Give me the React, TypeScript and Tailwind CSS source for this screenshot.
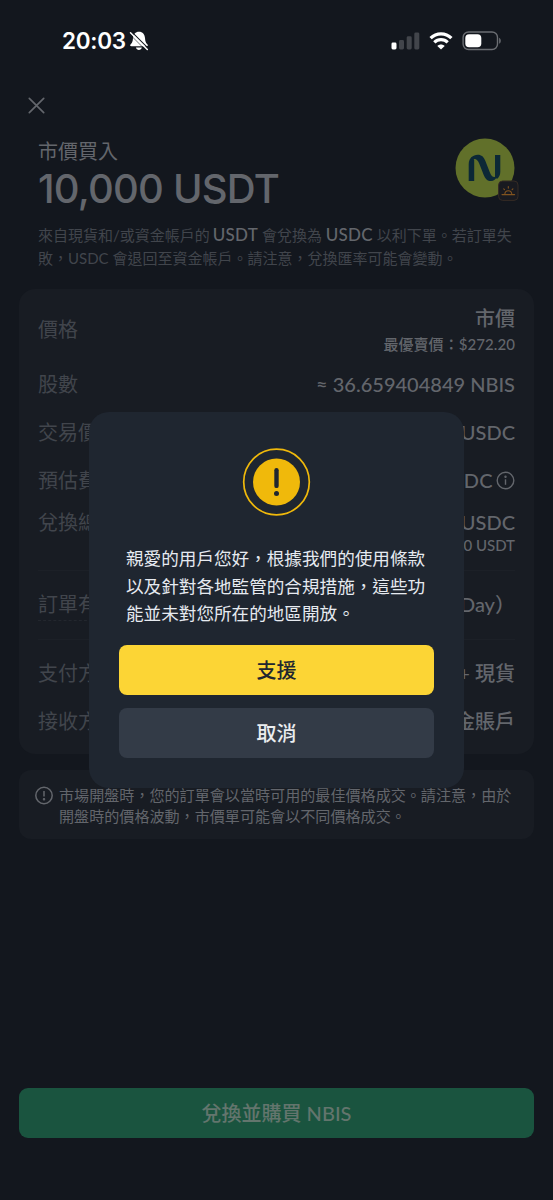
import type { ReactNode } from 'react';

function StatusBar() {
  return (
    <div className="flex h-[82px] shrink-0 items-center justify-between pl-[62px] pr-[51px]">
      <div className="flex items-center gap-[3px] text-white">
        <span className="font-['Inter',sans-serif] text-[22.5px] leading-[30px] font-semibold tracking-[-0.3px]">20:03</span>
        <svg width="20" height="20" viewBox="0 0 20 20" fill="none">
          <path d="M10 .8C6.300.8 4.300 3.400 4 7c-.3 4-1 4.800-2.300 6.200-1 1-.6 2 .8 2h15c1.400 0 1.800-1 .8-2-1.300-1.400-2-2.200-2.300-6.200-.3-3.600-2.300-6.200-6-6.200z" fill="currentColor" />
          <path d="M6.900 16.600h6c-.4 1.600-1.500 2.400-3 2.400s-2.600-.8-3-2.400z" fill="currentColor" />
          <path d="M2.700.800l16.800 16.800" stroke="#13171e" strokeWidth="1.200" />
          <path d="M1.500 1.700l16.800 16.800" stroke="currentColor" strokeWidth="1.500" strokeLinecap="round" />
          <path d="M.4 2.900l16.800 16.800" stroke="#13171e" strokeWidth="0.600" />
        </svg>
      </div>
      <div className="flex items-center">
        <svg width="29" height="18" viewBox="0 0 29 18" className="mr-[8.500px]">
          <rect x="0.500" y="10.500" width="5" height="7" rx="1.400" fill="#fff" />
          <rect x="8" y="8" width="5" height="9.500" rx="1.400" fill="#42454b" />
          <rect x="15.700" y="4.300" width="5" height="13.200" rx="1.400" fill="#42454b" />
          <rect x="23.300" y="0.500" width="5" height="17" rx="1.400" fill="#42454b" />
        </svg>
        <svg width="24" height="18" viewBox="0 0 24 18" fill="none" stroke="#fff">
          <path d="M1.600 6.100C7.400.4 16.600.4 22.400 6.100" strokeWidth="3.300" />
          <path d="M5.300 10.300c3.800-3.700 9.600-3.700 13.400 0" strokeWidth="3.200" />
          <path d="M12 17.600l-3.700-3.500c2.100-2 5.300-2 7.400 0z" fill="#fff" stroke="none" />
        </svg>
        <svg width="40" height="20" viewBox="0 0 40 20" className="ml-[9.500px]">
          <rect x="1.100" y="1" width="34.400" height="17.500" rx="5.500" fill="none" stroke="#6b6e73" strokeWidth="1.400" />
          <rect x="3.300" y="3.200" width="16" height="13" rx="3.800" fill="#fff" />
          <path d="M37.100 6.700c2.200.9 2.200 5.200 0 6.100z" fill="#6b6e73" />
        </svg>
      </div>
    </div>
  );
}

function TokenLogo() {
  return (
    <svg width="64" height="64" viewBox="0 0 64 64" className="mr-[-4px] shrink-0">
      <circle cx="30" cy="30" r="29.500" fill="#61702a" />
      <g fill="#0c2836">
        <path d="M13.700 43V26c0-3.200 1.200-5.800 3.500-7.500l2 3.500v21z" />
        <path d="M45.300 17H40v22l2 2c2.200-1.700 3.300-4.200 3.300-7.200z" />
        <path d="M16.500 19.500c1.600-1.800 3.800-2.700 6.300-2.700 3.800 0 6 2.200 7.500 6l4.500 11.400c1.100 2.900 2.400 4.700 4.700 4.800.9 0 1.700-.2 2.500-.7-1 3-3.200 4.700-6 4.700-3.600 0-5.800-2.300-7.300-6.100L24.200 25.500c-1.200-3.100-2.700-4.600-4.700-4.600-1 0-2 .2-3 .6z" />
      </g>
      <rect x="43.600" y="43" width="19.400" height="19.400" rx="4" fill="#191a20" stroke="#352b24" strokeWidth="1" />
      <g transform="translate(0 -0.700)" stroke="#80531f" strokeWidth="1.100" fill="none" strokeLinecap="round">
        <path d="M47 57.300h12.600M49.800 57c.3-4.700 6.700-4.700 7 0M53.300 49.300v1.500M48.700 51.500l.8.800M57.900 51.500l-.8.800" />
      </g>
    </svg>
  );
}

function Row({ label, className, children }: { label: ReactNode; className: string; children: ReactNode }) {
  return (
    <div className={`flex shrink-0 justify-between ${className}`}>
      <span className="text-[#41454c]">{label}</span>
      <div className="flex flex-col items-end font-medium text-[#63666c]">{children}</div>
    </div>
  );
}

function OrderCard() {
  return (
    <section className="mx-[19px] mt-[21px] flex h-[465px] shrink-0 flex-col rounded-[16px] bg-[#181c23] px-[19px] pt-[14px] text-[20px] leading-[28px]">
      <Row
        label={<span className="block pb-[2px]">價格</span>}
        className="h-[67px] items-center pb-[13px]"
      >
        <span>市價</span>
        <span className="text-[15px] leading-[25px] tracking-[0.07px]">最優賣價：$272.20</span>
      </Row>
      <Row label="股數" className="h-[48px]">
        <span>≈ 36.659404849 NBIS</span>
      </Row>
      <Row label="交易價格" className="h-[48px]">
        <span>272.77 USDC</span>
      </Row>
      <Row label="預估費用" className="h-[42px]">
        <span className="flex items-center gap-[3px]">
          <span className="tracking-[0.3px]">0 USDC</span>
          <svg width="19" height="19" viewBox="0 0 19 19" fill="none" stroke="#63666c" strokeWidth="1.400">
            <circle cx="9.500" cy="9.500" r="8.300" />
            <path d="M9.500 8.300v5.500" />
            <circle cx="9.500" cy="5.700" r="0.500" fill="#63666c" />
          </svg>
        </span>
      </Row>
      <Row label="兌換總額" className="h-[62px]">
        <span>9,999 USDC</span>
        <span className="text-[15px] leading-[19px]">10,000 USDT</span>
      </Row>
      <div className="h-px shrink-0 bg-[#1c2027]" />
      <Row
        label={<span className="inline-block h-[31px] border-b border-dashed border-[#23272e]">訂單有效期</span>}
        className="h-[68px] pt-[19px]"
      >
        <span>當日有效（Day）</span>
      </Row>
      <div className="h-px shrink-0 bg-[#1c2027]" />
      <Row label="支付方式" className="h-[67px] pt-[19px]">
        <span>資金 + 現貨</span>
      </Row>
      <Row label="接收方式" className="h-[28px]">
        <span>資金賬戶</span>
      </Row>
    </section>
  );
}

function RestrictionDialog() {
  return (
    <div role="dialog" className="absolute top-[412px] left-[89px] flex h-[376px] w-[375px] flex-col items-center rounded-[20px] bg-[#1f2630] px-[30px] pt-[36px]">
      <svg width="69" height="68" viewBox="0 0 69 68" className="shrink-0">
        <circle cx="34.500" cy="34" r="32.800" fill="none" stroke="#f0b90b" strokeWidth="1.700" />
        <circle cx="34.500" cy="34" r="23.500" fill="#f0b90b" />
        <path d="M34.500 22.200v15.700" stroke="#1f2630" strokeWidth="4.400" strokeLinecap="round" />
        <circle cx="34.500" cy="45.500" r="2.500" fill="#1f2630" />
      </svg>
      <p className="mt-[29px] w-[301px] text-[17.600px] leading-[27.500px] text-[#e6eaf0]">
        親愛的用戶您好，根據我們的使用條款
        <br />
        以及針對各地監管的合規措施，這些功
        <br />
        能並未對您所在的地區開放。
      </p>
      <button className="mt-[17px] h-[50px] w-full shrink-0 rounded-[8px] bg-[#fcd535] text-[20px] font-medium text-[#202630]">支援</button>
      <button className="mt-[13px] h-[50px] w-full shrink-0 rounded-[8px] bg-[#333b47] text-[20px] font-medium text-[#eaecef]">取消</button>
    </div>
  );
}

export default function App() {
  return (
    <main className="relative flex h-[1200px] w-[553px] flex-col overflow-hidden bg-[#13171e] font-['Lato','Noto_Sans_CJK_TC',sans-serif]">
      <StatusBar />
      <div className="flex h-[56px] shrink-0 pt-[15px] pl-[28px]">
        <svg width="17" height="17" viewBox="0 0 17 17" stroke="#63666c" strokeWidth="1.700" strokeLinecap="round">
          <path d="M1.300 1.300l14.400 14.400M15.700 1.300L1.300 15.700" />
        </svg>
      </div>
      <header className="flex h-[85px] shrink-0 justify-between px-[38px]">
        <div>
          <p className="text-[20px] leading-[26px] text-[#63666c]">市價買入</p>
          <h1 className="font-['Inter',sans-serif] text-[40px] leading-[50px] font-medium tracking-[-0.8px] whitespace-nowrap text-[#63666c]">10,000 USDT</h1>
        </div>
        <TokenLogo />
      </header>
      <p className="h-[45px] shrink-0 pl-[38px] text-[15px] leading-[23px] whitespace-nowrap text-[#41454c]">
        來自現貨和/或資金帳戶的<span className="ml-[3px] text-[17px] font-medium tracking-[0.25px] text-[#63666c]">USDT</span> 會兌換為{' '}
        <span className="text-[17px] font-medium tracking-[0.25px] text-[#63666c]">USDC</span>
        <span className="ml-[4px]">以利下單。若訂單失</span>
        <br />
        敗，USDC 會退回至資金帳戶。請注意，兌換匯率可能會變動。
      </p>
      <OrderCard />
      <section className="mx-[19px] mt-[16px] flex h-[69px] shrink-0 gap-[5px] rounded-[12px] bg-[#181c23] pt-[15px] pl-[16px] text-[#63666c]">
        <svg width="19" height="19" viewBox="0 0 19 19" fill="none" stroke="currentColor" strokeWidth="1.500" className="mt-[1px] shrink-0">
          <circle cx="9" cy="9.500" r="8.200" />
          <path d="M9 5v5.500" />
          <circle cx="9" cy="13.300" r="0.500" fill="currentColor" />
        </svg>
        <p className="text-[15.080px] leading-[20.500px] whitespace-nowrap">
          市場開盤時，您的訂單會以當時可用的最佳價格成交。請注意，由於
          <br />
          開盤時的價格波動，市價單可能會以不同價格成交。
        </p>
      </section>
      <button className="mx-[19px] mt-[249px] h-[50px] shrink-0 rounded-[9px] bg-[#1a543f] text-[20px] font-medium text-[#63756d]">兌換並購買 NBIS</button>
      <RestrictionDialog />
    </main>
  );
}
